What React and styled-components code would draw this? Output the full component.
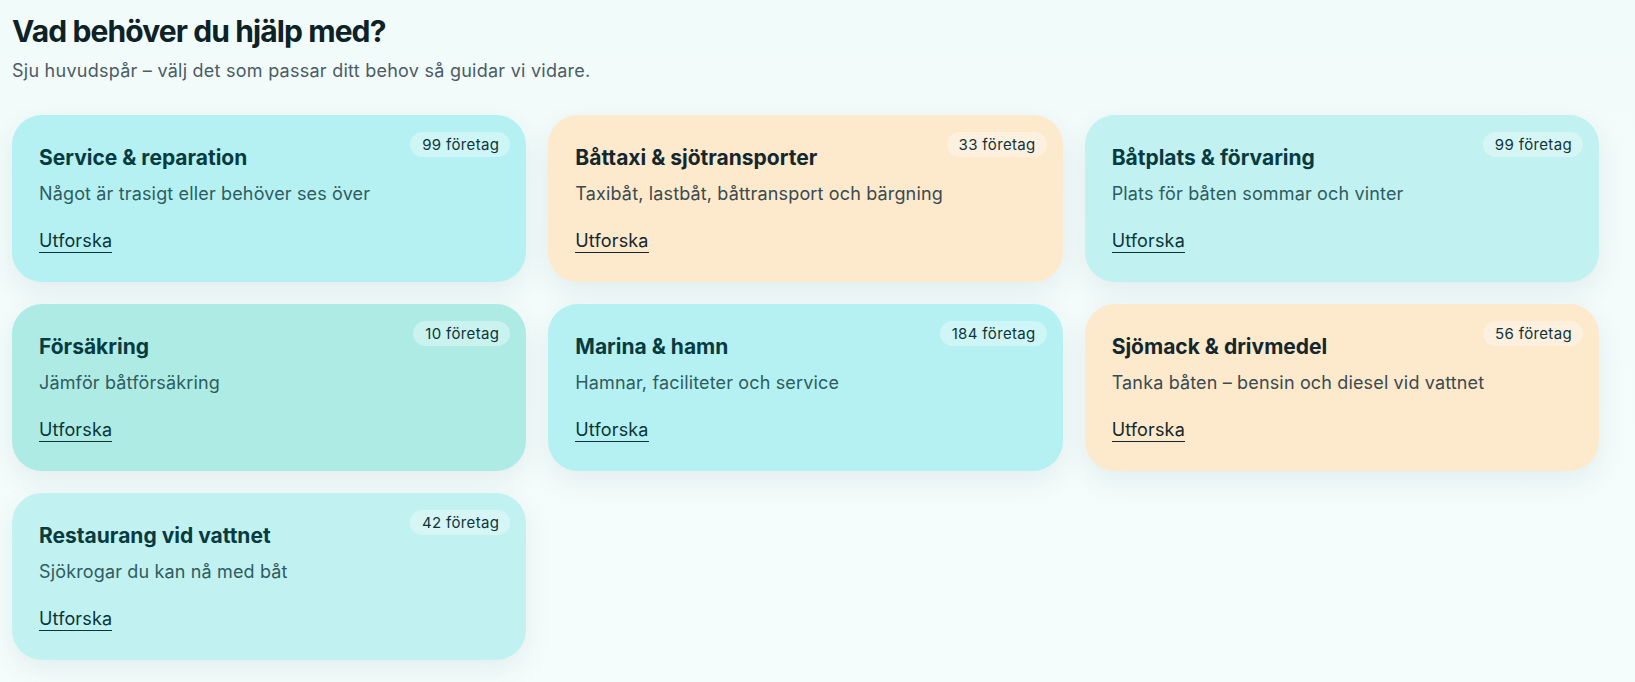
import React from "react";
import styled, { createGlobalStyle } from "styled-components";

const GlobalStyle = createGlobalStyle`
	html,
	body {
		margin: 0;
		padding: 0;
		background: #f2fcfb;
	}
	body {
		font-family: Inter, "DejaVu Sans", sans-serif;
		-webkit-font-smoothing: antialiased;
	}
`;

const Page = styled.main`
	min-height: 682px;
	box-sizing: border-box;
	padding: 13px 36px 24px 12px;
	background: linear-gradient(180deg, #f1fbfa 0%, #f5fdfc 100%);
`;

const Heading = styled.h1`
	margin: 0;
	font-size: 30px;
	line-height: 36px;
	font-weight: 700;
	letter-spacing: -0.03em;
	color: #0d2226;
`;

const Lead = styled.p`
	margin: 9px 0 0;
	font-size: 18px;
	line-height: 26px;
	letter-spacing: 0.25px;
	color: #4a5c64;
`;

const CardGrid = styled.section`
	margin-top: 31px;
	display: grid;
	grid-template-columns: repeat(3, 1fr);
	gap: 22px;
`;

const tones = {
	aqua: { bg: "#b5f1f3", title: "#083b40", text: "#2f5c60", link: "#0b3539" },
	mint: { bg: "#aeebe5", title: "#083b40", text: "#2f5c60", link: "#0b3539" },
	frost: { bg: "#c1f1f1", title: "#083b40", text: "#2f5c60", link: "#0b3539" },
	sand: { bg: "#fde9cc", title: "#13272c", text: "#3b4a4f", link: "#13272c" },
};

const Card = styled.article`
	position: relative;
	box-sizing: border-box;
	min-height: 167px;
	padding: 29px 27px 26px;
	border-radius: 30px;
	background: ${(p) => tones[p.$tone].bg};
	box-shadow: 0 10px 28px rgba(20, 70, 80, 0.08);
`;

const Title = styled.h2`
	margin: 0;
	font-size: 21px;
	line-height: 28px;
	font-weight: 700;
	letter-spacing: 0;
	color: ${(p) => tones[p.$tone].title};
`;

const Desc = styled.p`
	margin: 10px 0 0;
	font-size: 18px;
	line-height: 24px;
	letter-spacing: 0.15px;
	color: ${(p) => tones[p.$tone].text};
`;

const Explore = styled.a`
	display: inline-block;
	margin-top: 23px;
	font-size: 18px;
	line-height: 23px;
	letter-spacing: 0.15px;
	color: ${(p) => tones[p.$tone].link};
	text-decoration: none;
	border-bottom: 1.5px solid ${(p) => tones[p.$tone].link};
	cursor: pointer;
`;

const Count = styled.span`
	position: absolute;
	top: 17px;
	right: 16px;
	height: 25px;
	padding: 0 11px 0 12px;
	display: flex;
	align-items: center;
	border-radius: 999px;
	background: rgba(255, 255, 255, 0.35);
	font-size: 15px;
	letter-spacing: 0.35px;
	color: #10343a;
`;

const categories = [
	{ title: "Service & reparation", desc: "Något är trasigt eller behöver ses över", count: 99, tone: "aqua" },
	{ title: "Båttaxi & sjötransporter", desc: "Taxibåt, lastbåt, båttransport och bärgning", count: 33, tone: "sand" },
	{ title: "Båtplats & förvaring", desc: "Plats för båten sommar och vinter", count: 99, tone: "frost" },
	{ title: "Försäkring", desc: "Jämför båtförsäkring", count: 10, tone: "mint" },
	{ title: "Marina & hamn", desc: "Hamnar, faciliteter och service", count: 184, tone: "aqua" },
	{ title: "Sjömack & drivmedel", desc: "Tanka båten – bensin och diesel vid vattnet", count: 56, tone: "sand" },
	{ title: "Restaurang vid vattnet", desc: "Sjökrogar du kan nå med båt", count: 42, tone: "frost" },
];

function App() {
	return (
		<React.Fragment>
			<GlobalStyle />
			<Page>
				<Heading>Vad behöver du hjälp med?</Heading>
				<Lead>Sju huvudspår – välj det som passar ditt behov så guidar vi vidare.</Lead>
				<CardGrid>
					{categories.map((c) => (
						<Card key={c.title} $tone={c.tone}>
							<Count>{c.count} företag</Count>
							<Title $tone={c.tone}>{c.title}</Title>
							<Desc $tone={c.tone}>{c.desc}</Desc>
							<Explore $tone={c.tone}>Utforska</Explore>
						</Card>
					))}
				</CardGrid>
			</Page>
		</React.Fragment>
	);
}

export default App;
